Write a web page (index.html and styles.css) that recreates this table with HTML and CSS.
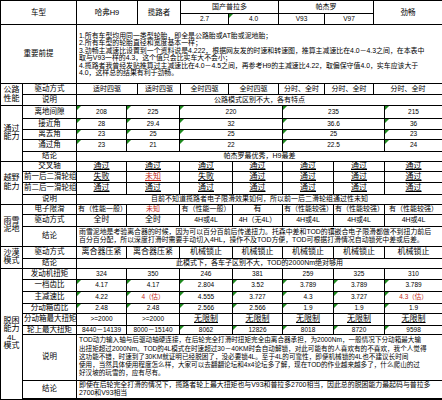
FILE: index.html
```html
<!DOCTYPE html>
<html lang="zh">
<head>
<meta charset="utf-8">
<title>车型对比</title>
<link rel="stylesheet" href="styles.css">
</head>
<body>
<table class="grid t1">
  <colgroup>
    <col class="w22"><col class="w54"><col class="w61"><col class="w43"><col class="w48"><col class="w50"><col class="w46"><col class="w49"><col class="w69">
  </colgroup>
  <tr class="r13">
    <td colspan="2" rowspan="2" class="lab">车型</td>
    <td rowspan="2" class="lab">哈弗H9</td>
    <td rowspan="2" class="lab">揽路者</td>
    <td colspan="2">国产普拉多</td>
    <td colspan="2">帕杰罗</td>
    <td rowspan="2" class="lab">劲畅</td>
  </tr>
  <tr class="r11">
    <td class="num">2.7</td>
    <td class="num g">4.0</td>
    <td class="num">V93</td>
    <td class="num">V97</td>
  </tr>
  <tr class="r59">
    <td colspan="2" class="lab">重要前提</td>
    <td colspan="7" class="para pre">1.所有车型均用同一类型轮胎，即全是公路胎或AT胎或泥地胎；<br>2.所有车型的轮胎直径和宽度基本一样；<br>3.劲畅主减速比设置到一个资料说是4.222，根据网友发的时速和转速图，推算主减速比在4.0－4.3之间，在本表中<br>取与V93一样的4.3，这个值只会比实车大不会小；<br>4.揽路者我曾经发贴推算过主减速比在4.0－4.5之间，再参考H9的主减速比4.22，取偏保守值4.0，实车应该大于<br>4.0，这样总的结果有利于劲畅。</td>
  </tr>
  <tr class="r11">
    <td rowspan="2" class="cat">公路<br>性能</td>
    <td class="lab">驱动方式</td>
    <td>适时四驱</td><td>适时四驱</td><td>全时四驱</td><td>全时四驱</td><td>分时、全时</td><td>分时、全时</td><td>分时、全时</td>
  </tr>
  <tr class="r11">
    <td class="lab">说明</td>
    <td colspan="7">公路模式区别不大，各有特点</td>
  </tr>
</table>
<table class="grid t2">
  <colgroup>
    <col class="w22"><col class="w54"><col class="w50"><col class="w53"><col class="w53"><col class="w50"><col class="w51"><col class="w51"><col class="w58">
  </colgroup>
  <tr class="r12">
    <td rowspan="5" class="cat">通过<br>能力</td>
    <td class="lab">离地间隙</td>
    <td class="num g">208</td><td class="num g">225</td><td colspan="2" class="num g">220</td><td colspan="2" class="num g">235</td><td class="num g">215</td>
  </tr>
  <tr class="r11">
    <td class="lab">接近角</td>
    <td class="num g">28</td><td class="num g">29.4</td><td colspan="2" class="num g">32</td><td colspan="2" class="num g">36.6</td><td class="num g">36</td>
  </tr>
  <tr class="r10">
    <td class="lab">离去角</td>
    <td class="num g">23</td><td class="num g">25</td><td colspan="2" class="num g">25</td><td colspan="2" class="num g">25</td><td class="num g">23</td>
  </tr>
  <tr class="r12">
    <td class="lab">通过角</td>
    <td class="num g">23</td><td class="num g">21</td><td colspan="2" class="num g">22</td><td colspan="2" class="num g">22.5</td><td class="num g">24</td>
  </tr>
  <tr class="r10">
    <td class="lab">结论</td>
    <td colspan="7">帕杰罗最优秀，H9最差</td>
  </tr>
  <tr class="r10">
    <td rowspan="4" class="cat">越野<br>能力</td>
    <td class="lab">交叉轴</td>
    <td class="big"><span class="u">通过</span></td><td class="big"><span class="u">通过</span></td><td class="big"><span class="u">通过</span></td><td class="big"><span class="u">通过</span></td><td class="big"><span class="u">通过</span></td><td class="big"><span class="u">通过</span></td><td class="big"><span class="u">通过</span></td>
  </tr>
  <tr class="r11">
    <td class="lab">前一后二滑轮组</td>
    <td class="big"><span class="u">失败</span></td><td class="big red"><span class="u">未知</span></td><td class="big"><span class="u">失败</span></td><td class="big"><span class="u">通过</span></td><td class="big"><span class="u">通过</span></td><td class="big"><span class="u">通过</span></td><td class="big"><span class="u">通过</span></td>
  </tr>
  <tr class="r12">
    <td class="lab">前二后一滑轮组</td>
    <td class="big"><span class="u">通过</span></td><td class="big"><span class="u">通过</span></td><td class="big"><span class="u">通过</span></td><td class="big"><span class="u">通过</span></td><td class="big"><span class="u">通过</span></td><td class="big"><span class="u">通过</span></td><td class="big"><span class="u">通过</span></td>
  </tr>
  <tr class="r10">
    <td class="lab">说明</td>
    <td colspan="7">目前不知道揽路者电子限滑效果如何，所以前一后二滑轮组通过性未知</td>
  </tr>
  <tr class="r10">
    <td rowspan="3" class="cat">雨雪<br>泥地</td>
    <td class="lab">电子限滑</td>
    <td>有（性能一般）</td><td class="red">未知</td><td>有（性能一般）</td><td class="big">有</td><td>有（性能较强）</td><td>有（性能较强）</td><td>有（性能较强）</td>
  </tr>
  <tr class="r12">
    <td class="lab">驱动方式</td>
    <td class="big">全时</td><td class="big">全时</td><td>4H或4L</td><td>4H（无4L）</td><td>4H或4L</td><td>4H或4L</td><td>4H或4L</td>
  </tr>
  <tr class="r20">
    <td class="lab">结论</td>
    <td colspan="7" class="para">雨雪泥地是考验离合器的时候，因为可以百分百前后传递扭力。托森中差和TOD的镶嵌合电子限滑都做不到扭力前后<br>百分百分配，所以深度打滑时需要手动切入4HL，操作不及TOD方便，TOD可根据打滑情况自动锁死中差或后差。</td>
  </tr>
  <tr class="r12">
    <td rowspan="2" class="cat">沙漠<br>模式</td>
    <td class="lab">驱动方式</td>
    <td class="big">离合器压紧</td><td class="big">离合器压紧</td><td class="big">机械锁止</td><td class="big">机械锁止</td><td class="big">机械锁止</td><td class="big">机械锁止</td><td class="big">机械锁止</td>
  </tr>
  <tr class="r10">
    <td class="lab">结论</td>
    <td colspan="7">此模式下，各车子区别不大，TOD的2000Nm绝对够用</td>
  </tr>
  <tr class="r11">
    <td rowspan="8" class="cat">脱困<br>能力<br>4L<br>模式</td>
    <td class="lab">发动机扭矩</td>
    <td class="num">324</td><td class="num">350</td><td class="num">246</td><td class="num">381</td><td class="num">259</td><td class="num">325</td><td class="num">310</td>
  </tr>
  <tr class="r12">
    <td class="lab">一档齿比</td>
    <td class="num g">4.17</td><td class="num g">4.17</td><td class="num g">2.804</td><td class="num g">3.52</td><td class="num g">3.789</td><td class="num g">3.789</td><td class="num g">3.789</td>
  </tr>
  <tr class="r12">
    <td class="lab">主减速比</td>
    <td class="num g">4.22</td><td class="num g red">4（估）</td><td class="num g">4.555</td><td class="num g">3.727</td><td class="num g">4.3</td><td class="num g">3.727</td><td class="num g red">4.3（估）</td>
  </tr>
  <tr class="r10">
    <td class="lab">分动箱齿比</td>
    <td class="num g">2.48</td><td class="num g">2.48</td><td class="num g">2.566</td><td class="num g">2.566</td><td class="num g">1.9</td><td class="num g">1.9</td><td class="num g">1.9</td>
  </tr>
  <tr class="r12">
    <td class="lab">分动箱最大扭矩</td>
    <td class="num">&gt;=2000</td><td class="num">&gt;=2000</td><td class="big"><span class="u">无限制</span></td><td class="big"><span class="u">无限制</span></td><td class="big"><span class="u">无限制</span></td><td class="big"><span class="u">无限制</span></td><td class="big"><span class="u">无限制</span></td>
  </tr>
  <tr class="r9">
    <td class="lab">轮上最大扭矩</td>
    <td class="num">8440－14139</td><td class="num">8000－15140</td><td class="num g">8062</td><td class="num g">12826</td><td class="num g">8018</td><td class="num g">8720</td><td class="num g">9598</td>
  </tr>
  <tr class="r46">
    <td class="lab">说明</td>
    <td colspan="7" class="para small">TOD动力输入轴与后驱动轴硬连接，在后轮完全打滑时扭矩完全由离合器承担，为2000Nm，一般情况下分动箱最大输<br>出扭矩超过2000Nm。TOD的4L模式在时速超过30－40KM时会自动解锁，对此可能有的人喜欢有的不喜欢，我个人觉得<br>这功能不错，时速到了30KM就证明已经脱困了，没必要锁4L。至于4L的可靠性，即便机械锁的4L也不建议长时间<br>使用，当然具体使用程度怎么样，大家可以去翻翻论坛和4x4论坛多了解，现在TOD的作业越来越多了，什么爬山的过<br>好汉坡的玩雪的，应有尽有。</td>
  </tr>
  <tr class="r19 last">
    <td class="lab">结论</td>
    <td colspan="7" class="para">即使在后轮完全打滑的情况下，揽路者轮上最大扭矩也与V93和普拉多2700相当，因此总的脱困能力最起码与普拉多<br>2700和V93相当</td>
  </tr>
</table>
</body>
</html>
```

FILE: styles.css
```css
html, body {
  margin: 0;
  padding: 0;
  background: #ffffff;
}

body {
  font-family: "Liberation Sans", "Noto Sans CJK SC", sans-serif;
  font-size: 7px;
  color: #000000;
  width: 442px;
}

.grid {
  border-collapse: collapse;
  table-layout: fixed;
  width: 442px;
}

.grid td {
  border: 1px solid #000000;
  padding: 0 1px;
  text-align: center;
  vertical-align: middle;
  line-height: 8px;
  white-space: nowrap;
  overflow: hidden;
  position: relative;
}

.t2 tr:first-child td {
  border-top: none;
}

.w22 { width: 22px; }
.w43 { width: 43px; }
.w46 { width: 46px; }
.w48 { width: 48px; }
.w49 { width: 49px; }
.w50 { width: 50px; }
.w51 { width: 51px; }
.w53 { width: 53px; }
.w54 { width: 54px; }
.w58 { width: 58px; }
.w61 { width: 61px; }
.w69 { width: 69px; }

.r9 { height: 9px; }
.r10 { height: 10px; }
.r11 { height: 11px; }
.r12 { height: 12px; }
.r13 { height: 13px; }
.r19 { height: 19px; }
.r20 { height: 20px; }
.r46 { height: 46px; }
.r59 { height: 59px; }

.last td {
  border-bottom: 2px solid #000000;
}

.lab {
  font-size: 7.5px;
}

.grid td.cat {
  font-size: 8px;
  line-height: 8.5px;
  white-space: normal;
  padding: 0;
}

.grid td.para {
  text-align: left;
  padding-left: 2px;
  line-height: 8.2px;
  font-size: 6.9px;
}

.grid td.pre {
  line-height: 7.5px;
}

.grid td.small {
  font-size: 6.6px;
}

.num {
  font-size: 6.5px;
}

.big {
  font-size: 8px;
}

.u {
  text-decoration: underline;
}

.red {
  color: #c42a22;
}

.g::before {
  content: "";
  position: absolute;
  left: 0;
  top: 0;
  border-top: 4px solid #1f8a1f;
  border-right: 4px solid transparent;
}
```
